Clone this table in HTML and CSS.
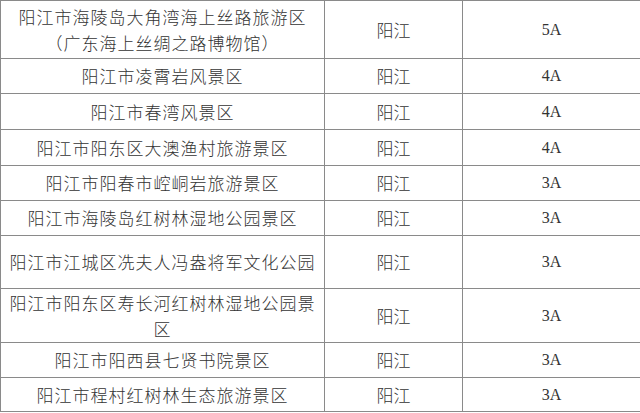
FILE: index.html
```html
<!DOCTYPE html>
<html lang="zh-CN">
<head>
<meta charset="utf-8">
<link rel="stylesheet" href="styles.css">
</head>
<body>
<table class="sites">
  <colgroup><col class="c-name"><col class="c-city"><col class="c-level"></colgroup>
  <tbody>
    <tr class="r58"><td class="name">阳江市海陵岛大角湾海上丝路旅游区<br>（广东海上丝绸之路博物馆）</td><td class="city">阳江</td><td class="level">5A</td></tr>
    <tr class="r35"><td class="name">阳江市凌霄岩风景区</td><td class="city">阳江</td><td class="level">4A</td></tr>
    <tr class="r36"><td class="name">阳江市春湾风景区</td><td class="city">阳江</td><td class="level">4A</td></tr>
    <tr class="r36"><td class="name">阳江市阳东区大澳渔村旅游景区</td><td class="city">阳江</td><td class="level">4A</td></tr>
    <tr class="r35"><td class="name">阳江市阳春市崆峒岩旅游景区</td><td class="city">阳江</td><td class="level">3A</td></tr>
    <tr class="r35"><td class="name">阳江市海陵岛红树林湿地公园景区</td><td class="city">阳江</td><td class="level">3A</td></tr>
    <tr class="r53"><td class="name">阳江市江城区冼夫人冯盎将军文化公园</td><td class="city">阳江</td><td class="level">3A</td></tr>
    <tr class="r54"><td class="name">阳江市阳东区寿长河红树林湿地公园景<br>区</td><td class="city">阳江</td><td class="level">3A</td></tr>
    <tr class="r35"><td class="name">阳江市阳西县七贤书院景区</td><td class="city">阳江</td><td class="level">3A</td></tr>
    <tr class="r34"><td class="name">阳江市程村红树林生态旅游景区</td><td class="city">阳江</td><td class="level">3A</td></tr>
  </tbody>
</table>
</body>
</html>
```
FILE: styles.css
```css
html, body {
  margin: 0;
  padding: 0;
  background: #ffffff;
}
.sites {
  width: 640px;
  border-collapse: collapse;
  table-layout: fixed;
  color: #333333;
  font-family: "Noto Sans CJK SC", "Noto Sans", sans-serif;
}
.c-name { width: 324px; }
.c-city { width: 138px; }
.c-level { width: 178px; }
.sites td {
  border: 1px solid #8a8a8a;
  padding: 0;
  text-align: center;
  vertical-align: middle;
  font-size: 17px;
  font-weight: 300;
  line-height: 26px;
}
.sites .name { letter-spacing: 1px; }
.sites .city { letter-spacing: 0; }
.sites .level {
  font-family: "Liberation Serif", "Times New Roman", serif;
  font-size: 16px;
  font-weight: 400;
}
.r58 { height: 58px; }
.r53 { height: 53px; }
.r54 { height: 54px; }
.r36 { height: 36px; }
.r35 { height: 35px; }
.r34 { height: 34px; }
```
